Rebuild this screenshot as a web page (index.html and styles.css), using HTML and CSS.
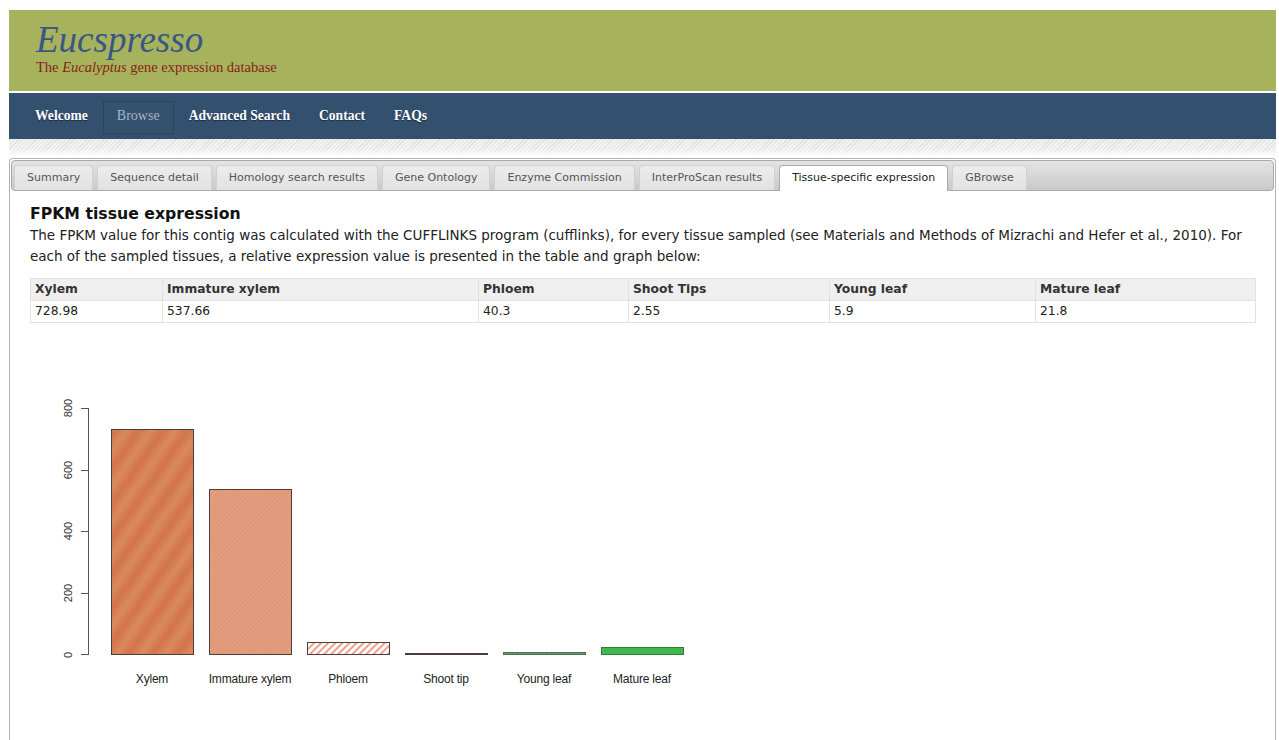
FILE: index.html
```html
<!DOCTYPE html>
<html lang="en">
<head>
<meta charset="utf-8">
<title>Eucspresso - Tissue-specific expression</title>
<link rel="stylesheet" href="styles.css">
</head>
<body>
<div class="page">
  <header class="masthead">
    <h1 class="site-title">Eucspresso</h1>
    <p class="site-tagline">The <em>Eucalyptus</em> gene expression database</p>
  </header>

  <nav class="mainnav">
    <a class="mainnav-item" href="#">Welcome</a>
    <a class="mainnav-item is-current" href="#">Browse</a>
    <a class="mainnav-item" href="#">Advanced Search</a>
    <a class="mainnav-item" href="#">Contact</a>
    <a class="mainnav-item" href="#">FAQs</a>
  </nav>

  <div class="stripe-band"></div>

  <div class="tabs">
    <ul class="tabs-nav">
      <li class="tab"><a href="#">Summary</a></li>
      <li class="tab"><a href="#">Sequence detail</a></li>
      <li class="tab"><a href="#">Homology search results</a></li>
      <li class="tab"><a href="#">Gene Ontology</a></li>
      <li class="tab"><a href="#">Enzyme Commission</a></li>
      <li class="tab"><a href="#">InterProScan results</a></li>
      <li class="tab is-active"><a href="#">Tissue-specific expression</a></li>
      <li class="tab"><a href="#">GBrowse</a></li>
    </ul>

    <section class="tab-panel">
      <h2 class="panel-title">FPKM tissue expression</h2>
      <p class="panel-text">The FPKM value for this contig was calculated with the CUFFLINKS program (cufflinks), for every tissue sampled (see Materials and Methods of Mizrachi and Hefer et al., 2010). For each of the sampled tissues, a relative expression value is presented in the table and graph below:</p>

      <table class="fpkm-table">
        <thead>
          <tr>
            <th class="col-xylem">Xylem</th>
            <th class="col-immature">Immature xylem</th>
            <th class="col-phloem">Phloem</th>
            <th class="col-shoot">Shoot Tips</th>
            <th class="col-young">Young leaf</th>
            <th class="col-mature">Mature leaf</th>
          </tr>
        </thead>
        <tbody>
          <tr>
            <td>728.98</td>
            <td>537.66</td>
            <td>40.3</td>
            <td>2.55</td>
            <td>5.9</td>
            <td>21.8</td>
          </tr>
        </tbody>
      </table>

      <svg class="barplot" width="700" height="380" viewBox="30 330 700 380" xmlns="http://www.w3.org/2000/svg">
        <defs>
          <linearGradient id="xylemBand" x1="0" y1="0" x2="1" y2="0">
            <stop offset="0" stop-color="#d3734a"/>
            <stop offset="0.5" stop-color="#d98a60"/>
            <stop offset="1" stop-color="#d3734a"/>
          </linearGradient>
          <pattern id="xylemFill" width="20" height="20" patternUnits="userSpaceOnUse" patternTransform="rotate(35)">
            <rect width="20" height="20" fill="url(#xylemBand)"/>
          </pattern>
          <pattern id="immatureFill" width="3" height="3" patternUnits="userSpaceOnUse" patternTransform="rotate(45)">
            <rect width="3" height="3" fill="#e29e7e"/>
            <rect width="1" height="3" fill="#dc9474"/>
          </pattern>
          <pattern id="phloemFill" width="5" height="5" patternUnits="userSpaceOnUse" patternTransform="rotate(45)">
            <rect width="5" height="5" fill="#ffffff"/>
            <rect width="2" height="5" fill="#eea186"/>
          </pattern>
          <pattern id="youngFill" width="3" height="3" patternUnits="userSpaceOnUse" patternTransform="rotate(45)">
            <rect width="3" height="3" fill="#5d935d"/>
            <rect width="1" height="3" fill="#7aa87a"/>
          </pattern>
        </defs>

        <!-- y axis -->
        <g class="axis">
          <line x1="88.5" y1="407" x2="88.5" y2="654"/>
          <line x1="81" y1="407.5" x2="88.5" y2="407.5"/>
          <line x1="81" y1="469.5" x2="88.5" y2="469.5"/>
          <line x1="81" y1="530.5" x2="88.5" y2="530.5"/>
          <line x1="81" y1="592.5" x2="88.5" y2="592.5"/>
          <line x1="81" y1="653.5" x2="88.5" y2="653.5"/>
        </g>
        <g class="axis-labels">
          <text transform="translate(72 407) rotate(-90)">800</text>
          <text transform="translate(72 469) rotate(-90)">600</text>
          <text transform="translate(72 530) rotate(-90)">400</text>
          <text transform="translate(72 592) rotate(-90)">200</text>
          <text transform="translate(72 654) rotate(-90)">0</text>
        </g>

        <!-- bars -->
        <rect class="bar" x="111.5" y="428.5" width="82" height="225" fill="url(#xylemFill)"/>
        <rect class="bar" x="209.5" y="488.5" width="82" height="165" fill="url(#immatureFill)"/>
        <rect class="bar" x="307.5" y="641.5" width="82" height="12" fill="url(#phloemFill)"/>
        <rect class="bar" x="405.5" y="652.5" width="82" height="1" fill="#555555"/>
        <rect class="bar bar-young" x="503.5" y="651.5" width="82" height="2" fill="url(#youngFill)"/>
        <rect class="bar bar-mature" x="601.5" y="646.5" width="82" height="7" fill="#3dba4b"/>

        <!-- category labels -->
        <g class="cat-labels">
          <text x="152" y="682">Xylem</text>
          <text x="250" y="682">Immature xylem</text>
          <text x="348" y="682">Phloem</text>
          <text x="446" y="682">Shoot tip</text>
          <text x="544" y="682">Young leaf</text>
          <text x="642" y="682">Mature leaf</text>
        </g>
      </svg>
    </section>
  </div>
</div>
</body>
</html>
```

FILE: styles.css
```css
html, body {
  margin: 0;
  padding: 0;
  background: #ffffff;
}

.page {
  margin: 10px 3px 0 9px;
}

/* ---- masthead ---- */
.masthead {
  background: #a6b25c;
  height: 81px;
  padding: 0 0 0 27px;
  box-sizing: border-box;
}

.site-title {
  margin: 0;
  padding-top: 11px;
  font-family: "Liberation Serif", serif;
  font-style: italic;
  font-weight: normal;
  font-size: 37px;
  line-height: 38px;
  color: #3a5686;
}

.site-tagline {
  margin: 0;
  font-family: "Liberation Serif", serif;
  font-size: 14.5px;
  line-height: 16px;
  color: #8a1f1c;
}

.site-tagline em {
  font-style: italic;
}

/* ---- main navigation ---- */
.mainnav {
  margin-top: 2px;
  height: 46px;
  box-sizing: border-box;
  background: #33506f;
  padding: 8px 12px 0;
  display: flex;
  gap: 1px;
  align-items: flex-start;
}

.mainnav-item {
  display: block;
  height: 33px;
  line-height: 28px;
  padding: 0 13px;
  border: 1px solid transparent;
  font-family: "Liberation Serif", serif;
  font-weight: bold;
  font-size: 13.6px;
  color: #ffffff;
  text-decoration: none;
  text-shadow: 0 1px 1px rgba(0, 0, 0, 0.45);
  box-sizing: border-box;
}

.mainnav-item.is-current {
  color: #a5b5c8;
  font-weight: normal;
  font-size: 14px;
  border-color: #2a455d;
  background: #34516f;
  text-shadow: none;
}

/* ---- decorative band under the nav ---- */
.stripe-band {
  height: 17px;
  background:
    linear-gradient(to bottom, rgba(255,255,255,0) 0, rgba(255,255,255,0.2) 10px, rgba(255,255,255,0.95) 17px),
    repeating-linear-gradient(-45deg, #dedede 0, #dedede 1px, #f1f1f1 1px, #f1f1f1 3px);
  margin-bottom: 2px;
}

/* ---- tabs ---- */
.tabs {
  border: 1px solid #b4b4b4;
  border-bottom: 0;
  border-radius: 4px 4px 0 0;
  padding: 1px 1px 0;
  min-height: 580px;
}

.tabs-nav {
  list-style: none;
  margin: 0;
  padding: 4px 2px 0;
  height: 31px;
  box-sizing: border-box;
  border: 1px solid #aaaaaa;
  border-radius: 4px;
  background: linear-gradient(to bottom, #e4e4e4, #c9c9c9);
  display: flex;
  gap: 4px;
}

.tab {
  height: 25px;
  box-sizing: border-box;
  border: 1px solid #d0d0d0;
  border-bottom: 0;
  border-radius: 4px 4px 0 0;
  background: linear-gradient(to bottom, #ececec, #e2e2e2);
}

.tab a {
  display: block;
  padding: 0 12px;
  line-height: 24px;
  font-family: "DejaVu Sans", Verdana, sans-serif;
  font-size: 11px;
  color: #555555;
  text-decoration: none;
}

.tab.is-active {
  background: #ffffff;
  border-color: #aaaaaa;
  height: 26px;
}

.tab.is-active a {
  color: #212121;
}

/* ---- panel ---- */
.tab-panel {
  padding: 14px 18px 0 19px;
}

.panel-title {
  margin: 0;
  font-family: "DejaVu Sans", Verdana, sans-serif;
  font-weight: bold;
  font-size: 15.7px;
  line-height: 18px;
  color: #111111;
}

.panel-text {
  margin: 2px 0 11px;
  font-family: "DejaVu Sans", Verdana, sans-serif;
  font-size: 13.5px;
  line-height: 21px;
  color: #222222;
}

.fpkm-table {
  width: 100%;
  border-collapse: collapse;
  font-family: "DejaVu Sans", Verdana, sans-serif;
  font-size: 12.3px;
  color: #222222;
}

.fpkm-table th,
.fpkm-table td {
  text-align: left;
  padding: 3px 4px;
  height: 22px;
  box-sizing: border-box;
  border: 1px solid #e2e2e2;
  line-height: 15px;
}

.fpkm-table th {
  background: #efefef;
  font-weight: bold;
  color: #333333;
}

.col-xylem { width: 132px; }
.col-immature { width: 316px; }
.col-phloem { width: 150px; }
.col-shoot { width: 201px; }
.col-young { width: 206px; }
.col-mature { width: 220px; }

/* ---- bar plot ---- */
.barplot {
  display: block;
  margin-top: 8px;
}

.axis line {
  stroke: #555555;
  stroke-width: 1;
}

.axis-labels text {
  font-family: "Liberation Sans", Arial, sans-serif;
  font-size: 11px;
  fill: #333333;
  text-anchor: middle;
}

.bar {
  stroke: #4d3e38;
  stroke-width: 1;
}

.bar-young {
  stroke: #4f6e4f;
}

.bar-mature {
  stroke: #2e7d38;
}

.cat-labels text {
  font-family: "Liberation Sans", Arial, sans-serif;
  font-size: 12px;
  fill: #222222;
  text-anchor: middle;
  letter-spacing: -0.2px;
}
```
